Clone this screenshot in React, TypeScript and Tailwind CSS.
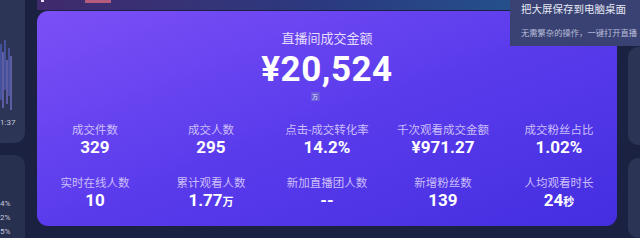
import React from 'react';

const stats = [
  { label: '成交件数', value: '329' },
  { label: '成交人数', value: '295' },
  { label: '点击-成交转化率', value: '14.2%' },
  { label: '千次观看成交金额', value: '¥971.27' },
  { label: '成交粉丝占比', value: '1.02%' },
  { label: '实时在线人数', value: '10' },
  { label: '累计观看人数', value: '1.77', unit: '万' },
  { label: '新加直播团人数', value: '--' },
  { label: '新增粉丝数', value: '139' },
  { label: '人均观看时长', value: '24', unit: '秒' },
];

const bars = [
  [44, 100], [52, 108], [40, 90], [60, 104], [48, 96], [56, 110],
];

export default function App() {
  return (
    <div
      className="relative flex h-[238px] w-[640px] overflow-hidden bg-[#1b2140]"
      style={{ fontFamily: 'Roboto, "Noto Sans CJK SC", sans-serif' }}
    >
      {/* left side panels */}
      <div className="flex w-[25px] shrink-0 flex-col gap-[12px]">
        <div className="relative h-[143px] rounded-br-[10px] bg-[#2c3556]">
          <svg width="25" height="120" className="absolute left-0 top-0">
            {bars.map(([y1, y2], i) => (
              <line
                key={i}
                x1={1 + i * 2}
                x2={1 + i * 2}
                y1={y1}
                y2={y2}
                stroke={i % 2 ? '#8f86f0' : '#5f6ee0'}
                strokeWidth="1"
              />
            ))}
          </svg>
          <span className="absolute left-0 top-[119px] text-[8px] leading-none text-[#c5c9dc]">1:37</span>
        </div>
        <div className="flex flex-1 flex-col justify-end gap-[6px] rounded-tr-[10px] bg-[#28304f] pb-[2px] text-[8px] leading-none text-[#c5c9dc]">
          <span>4%</span>
          <span>2%</span>
          <span>5%</span>
        </div>
      </div>

      {/* main column */}
      <div className="ml-[12px] flex w-[580px] shrink-0 flex-col">
        <div className="relative h-[10px] bg-gradient-to-r from-[#3f2a6c] via-[#2a3a80] to-[#1d5c92]">
          <div className="absolute left-[48px] top-0 h-[3px] w-[26px] bg-[#b35c7e]" />
          <div className="absolute left-[4px] top-0 h-[2px] w-[3px] bg-[#e8e0ff]" />
        </div>
        <div className="mt-[1px] flex h-[215px] flex-col items-center rounded-[11px] bg-gradient-to-br from-[#7c4ff6] via-[#5a3bec] to-[#432ee0] pt-[20px]">
          <div className="text-[13px] leading-[16px] text-[#e4defe]">直播间成交金额</div>
          <div className="mt-[4px] text-[35px] font-bold leading-[38px] tracking-[0.5px] text-white">
            ¥20,524
          </div>
          <div className="mt-[3px] flex h-[9px] w-[9px] -translate-x-[12px] items-center justify-center rounded-[1px] bg-[#6a5cd8] text-[6px] leading-none text-[#e8e4ff]">
            万
          </div>
          <div className="mt-[22px] grid w-full grid-cols-5 gap-y-[19px]">
            {stats.map((s) => (
              <div key={s.label} className="flex flex-col items-center">
                <span className="text-[11.5px] leading-[14px] text-[#cbbffb]">{s.label}</span>
                <span className="text-[17px] font-bold leading-[20px] text-white">
                  {s.value}
                  {s.unit && <span className="text-[11px] font-bold">{s.unit}</span>}
                </span>
              </div>
            ))}
          </div>
        </div>
      </div>

      {/* right side panels */}
      <div className="ml-[11px] mt-[47px] flex flex-1 flex-col gap-[13px]">
        <div className="h-[98px] rounded-l-[10px] bg-[#2b3455]" />
        <div className="flex-1 rounded-l-[10px] bg-[#2b3455]" />
      </div>

      {/* tooltip */}
      <div className="absolute right-0 top-0 h-[46px] w-[130px] bg-[#394272] pl-[11px] pt-[3px]">
        <div className="text-[10.5px] leading-[14px] text-[#e6e8f5]">把大屏保存到电脑桌面</div>
        <div className="mt-[10px] whitespace-nowrap text-[8.3px] leading-[12px] text-[#b9bfdb]">
          无需繁杂的操作，一键打开直播
        </div>
      </div>
    </div>
  );
}
